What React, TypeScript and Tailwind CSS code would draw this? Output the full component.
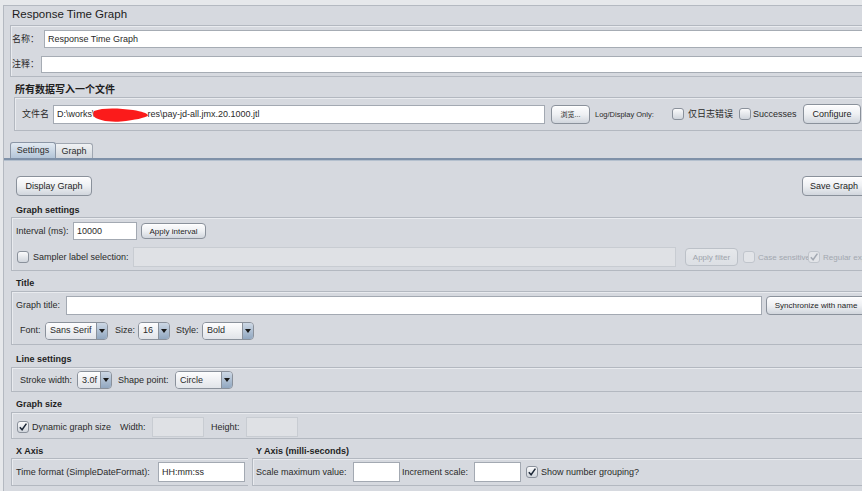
import React from "react";

const box = "border border-r-0 border-[#b3b8c0] shadow-[inset_1px_1px_0_#e9ebef]";

function Btn({ children, className = "", disabled = false }: { children: React.ReactNode; className?: string; disabled?: boolean }) {
  return (
    <div
      className={`flex shrink-0 items-center justify-center whitespace-nowrap rounded-[4px] border ${
        disabled
          ? "border-[#bcc1c8] bg-linear-to-b from-[#e6e8eb] to-[#dcdfe4] text-[#9ea4ac]"
          : "border-[#8a919b] bg-linear-to-b from-[#fdfdfe] via-[#eef0f3] to-[#d1d6dd] text-[#1e1e1e] shadow-[inset_0_1px_0_#ffffff]"
      } ${className}`}
    >
      {children}
    </div>
  );
}

function Check({ checked = false, disabled = false }: { checked?: boolean; disabled?: boolean }) {
  return (
    <div
      className={`flex h-[12px] w-[12px] shrink-0 items-center justify-center rounded-[3px] border ${
        disabled ? "border-[#c0c5cc] bg-[#e2e4e8]" : "border-[#8a919b] bg-linear-to-b from-[#fbfbfc] to-[#d0d5dc]"
      }`}
    >
      {checked && (
        <svg width="10" height="10" viewBox="0 0 10 10">
          <path d="M1.8 5.2 L4.1 7.8 L8.4 1.6" fill="none" stroke={disabled ? "#a3a9b2" : "#1d2838"} strokeWidth="1.5" />
        </svg>
      )}
    </div>
  );
}

function Combo({ value, className }: { value: string; className: string }) {
  return (
    <div className={`flex h-[18px] shrink-0 overflow-hidden rounded-[4px] border border-[#8a919b] ${className}`}>
      <div className="flex flex-1 items-center bg-linear-to-b from-[#fdfdfe] to-[#e1e4e9] pl-[4px] whitespace-nowrap">{value}</div>
      <div className="flex w-[11px] items-center justify-center border-l border-[#8a919b] bg-linear-to-b from-[#cdd8e5] to-[#91a7c0]">
        <svg width="6" height="4" viewBox="0 0 6 4">
          <path d="M0 0 H6 L3 4Z" fill="#1a1a1a" />
        </svg>
      </div>
    </div>
  );
}

function Input({ className = "", children }: { className?: string; children?: React.ReactNode }) {
  return (
    <div className={`relative flex shrink-0 items-center whitespace-nowrap border border-[#a3a9b2] bg-white pl-[3px] ${className}`}>
      {children}
    </div>
  );
}

function Disabled({ className = "" }: { className?: string }) {
  return <div className={`shrink-0 border border-[#c8ccd2] bg-[#dfe1e5] ${className}`} />;
}

export default function App() {
  return (
    <div className="h-[491px] w-[862px] overflow-hidden bg-[#e6e8eb] pl-[3px] pt-[5px] text-[9px] leading-[11px] text-[#2a2a2a] font-[family-name:'Liberation_Sans','Noto_Sans_CJK_SC',sans-serif]">
      <div className="flex h-[486px] flex-col border-l border-t border-[#b4b9c1] bg-[#d6d9df]">
        {/* window title */}
        <div className="flex h-[19px] items-center pb-[3px] pl-[8px] text-[11.5px] leading-[14px] text-[#1c1c1c]">Response Time Graph</div>

        {/* name / comments */}
        <div className={`ml-[6px] flex flex-col gap-[8px] pb-[3px] pl-[1px] pt-[4px] ${box}`}>
          <div className="flex h-[18px] items-center">
            <span className="w-[32px] shrink-0">名称：</span>
            <div className="flex h-full flex-1 items-center border border-r-0 border-[#a6acb4] bg-white pl-[3px]">Response Time Graph</div>
          </div>
          <div className="flex h-[17px] items-center">
            <span className="w-[29px] shrink-0">注释：</span>
            <div className="h-full flex-1 border border-r-0 border-[#a6acb4] bg-white" />
          </div>
        </div>

        {/* write all data to file */}
        <div className="flex h-[20px] items-center pl-[11px] pt-[4px] text-[10px] font-bold text-[#1e1e1e]">所有数据写入一个文件</div>
        <div className={`ml-[10px] flex h-[34px] items-center overflow-hidden pl-[7px] ${box}`}>
          <span className="w-[31px] shrink-0">文件名</span>
          <Input className="h-[19px] w-[492px]">
            <span>D:\works\</span>
            <span className="inline-block w-[53px] shrink-0" />
            <span>res\pay-jd-all.jmx.20.1000.jtl</span>
            <svg className="absolute left-[39px] top-[1px]" width="56" height="16" viewBox="0 0 56 16">
              <path d="M1 4 C9 0.5, 26 1, 40 3 C49 4.5, 54 6, 55 8.5 C52 11, 42 13, 28 14.5 C15 15.5, 5 13, 1.5 10 C0 8, 0 6, 1 4Z" fill="#fb1b1b" />
            </svg>
          </Input>
          <Btn className="ml-[6px] h-[19px] w-[39px] text-[7px]">浏览...</Btn>
          <span className="ml-[5px] w-[77px] shrink-0 whitespace-nowrap text-[7.5px]">Log/Display Only:</span>
          <Check />
          <span className="ml-[4px] w-[45px] shrink-0 whitespace-nowrap">仅日志错误</span>
          <div className="ml-[6px]">
            <Check />
          </div>
          <span className="ml-[2px] w-[50px] shrink-0 whitespace-nowrap">Successes</span>
          <Btn className="h-[20px] w-[58px]">Configure</Btn>
        </div>

        {/* tabs */}
        <div className="mt-[11px] flex h-[16px] items-end pl-[6px]">
          <div className="flex h-[16px] w-[46px] items-center justify-center rounded-t-[3px] border border-b-0 border-[#8b96a6] bg-linear-to-b from-[#e3eaf2] to-[#b3c5d8]">Settings</div>
          <div className="flex h-[15px] w-[37px] items-center justify-center rounded-tr-[3px] border border-b-0 border-l-0 border-[#a0a7b1] bg-linear-to-b from-[#f0f2f4] to-[#d3d7dd]">Graph</div>
        </div>
        <div className="h-[2px] bg-[#7f91a8]" />
        <div className="h-[1px] bg-[#b4c0ce]" />

        {/* settings panel */}
        <div className="mt-[15px] flex h-[20px] items-center justify-between pl-[12px]">
          <Btn className="h-[20px] w-[76px]">Display Graph</Btn>
          <Btn className="-mr-[4px] h-[20px] w-[64px]">Save Graph</Btn>
        </div>

        <div className="flex h-[21px] items-end pb-[1px] pl-[12px] font-bold text-[#1e1e1e]">Graph settings</div>
        <div className={`ml-[7px] flex flex-col gap-[7px] overflow-hidden pb-[3px] pl-[4px] pt-[4px] ${box}`}>
          <div className="flex h-[18px] items-center">
            <span className="w-[57px] shrink-0">Interval (ms):</span>
            <Input className="h-[18px] w-[64px]">10000</Input>
            <Btn className="ml-[4px] h-[16px] w-[65px] text-[8px]">Apply interval</Btn>
          </div>
          <div className="flex h-[20px] items-center pl-[1px]">
            <Check />
            <span className="ml-[4px] w-[100px] shrink-0 whitespace-nowrap">Sampler label selection:</span>
            <Disabled className="h-[20px] w-[543px]" />
            <Btn disabled className="ml-[9px] h-[18px] w-[53px] text-[8px]">Apply filter</Btn>
            <div className="ml-[5px]">
              <Check disabled />
            </div>
            <span className="ml-[3px] w-[50px] shrink-0 whitespace-nowrap text-[8px] text-[#a2a7af]">Case sensitive</span>
            <Check disabled checked />
            <span className="ml-[3px] shrink-0 whitespace-nowrap text-[8px] text-[#a2a7af]">Regular expression</span>
          </div>
        </div>

        <div className="flex h-[20px] items-end pb-[2px] pl-[12px] font-bold text-[#1e1e1e]">Title</div>
        <div className={`ml-[7px] flex flex-col gap-[6px] overflow-hidden pb-[4px] pl-[4px] pt-[4px] ${box}`}>
          <div className="flex h-[19px] items-center">
            <span className="w-[50px] shrink-0">Graph title:</span>
            <Input className="h-[19px] w-[696px]" />
            <Btn className="ml-[4px] h-[19px] w-[100px] text-[8px]">Synchronize with name</Btn>
          </div>
          <div className="flex h-[19px] items-center pl-[4px]">
            <span className="w-[25px] shrink-0">Font:</span>
            <Combo className="w-[63px]" value="Sans Serif" />
            <span className="ml-[7px] w-[23px] shrink-0">Size:</span>
            <Combo className="w-[32px]" value="16" />
            <span className="ml-[6px] w-[26px] shrink-0">Style:</span>
            <Combo className="w-[52px]" value="Bold" />
          </div>
        </div>

        <div className="flex h-[22px] items-end pb-[2px] pl-[12px] font-bold text-[#1e1e1e]">Line settings</div>
        <div className={`ml-[7px] flex flex-col overflow-hidden pb-[2px] pl-[4px] pt-[3px] ${box}`}>
          <div className="flex h-[18px] items-center pl-[4px]">
            <span className="w-[57px] shrink-0">Stroke width:</span>
            <Combo className="w-[35px]" value="3.0f" />
            <span className="ml-[6px] w-[57px] shrink-0">Shape point:</span>
            <Combo className="w-[58px]" value="Circle" />
          </div>
        </div>

        <div className="flex h-[20px] items-end pb-[2px] pl-[12px] font-bold text-[#1e1e1e]">Graph size</div>
        <div className={`ml-[7px] flex flex-col overflow-hidden pb-[1px] pl-[4px] pt-[4px] ${box}`}>
          <div className="flex h-[20px] items-center pl-[1px]">
            <Check checked />
            <span className="ml-[3px] w-[88px] shrink-0 whitespace-nowrap">Dynamic graph size</span>
            <span className="w-[32px] shrink-0">Width:</span>
            <Disabled className="h-[20px] w-[52px]" />
            <span className="ml-[7px] w-[35px] shrink-0">Height:</span>
            <Disabled className="h-[20px] w-[52px]" />
          </div>
        </div>

        <div className="flex h-[19px] items-end pb-[1px] font-bold text-[#1e1e1e]">
          <span className="w-[248px] shrink-0 pl-[12px]">X Axis</span>
          <span className="pl-[4px]">Y Axis (milli-seconds)</span>
        </div>
        <div className="ml-[7px] flex">
          <div className={`w-[237px] shrink-0 border-r pb-[3px] pl-[4px] pt-[3px] ${box}`}>
            <div className="flex h-[20px] items-center">
              <span className="w-[142px] shrink-0 whitespace-nowrap">Time format (SimpleDateFormat):</span>
              <Input className="h-[20px] w-[87px]">HH:mm:ss</Input>
            </div>
          </div>
          <div className={`ml-[4px] flex-1 overflow-hidden pb-[3px] pl-[3px] pt-[3px] ${box}`}>
            <div className="flex h-[20px] items-center">
              <span className="w-[97px] shrink-0 whitespace-nowrap">Scale maximum value:</span>
              <Input className="h-[20px] w-[47px]" />
              <span className="ml-[2px] w-[72px] shrink-0 whitespace-nowrap">Increment scale:</span>
              <Input className="h-[20px] w-[47px]" />
              <div className="ml-[5px]">
                <Check checked />
              </div>
              <span className="ml-[3px] shrink-0 whitespace-nowrap">Show number grouping?</span>
            </div>
          </div>
        </div>
      </div>
    </div>
  );
}
